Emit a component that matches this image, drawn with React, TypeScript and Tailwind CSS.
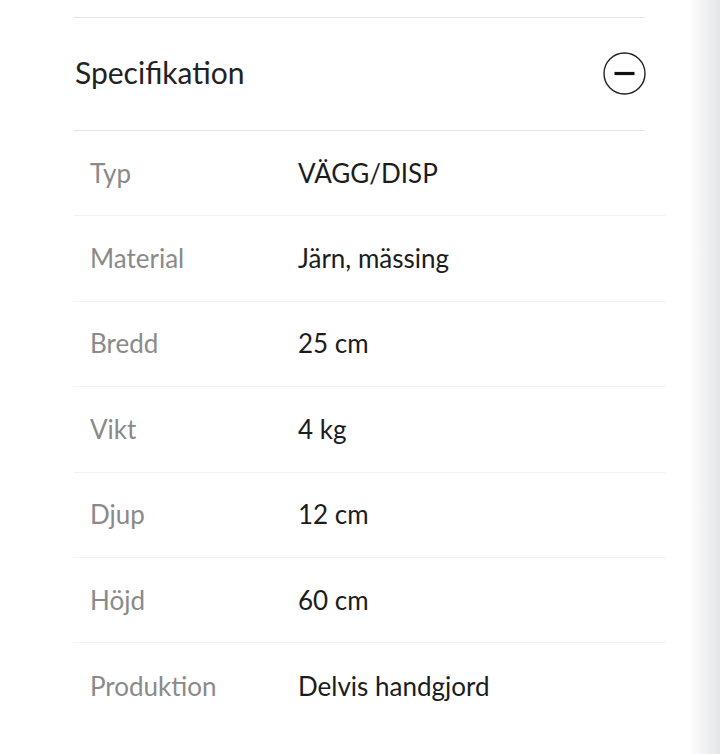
import React from "react";

const rows: [string, string][] = [
  ["Typ", "VÄGG/DISP"],
  ["Material", "Järn, mässing"],
  ["Bredd", "25 cm"],
  ["Vikt", "4 kg"],
  ["Djup", "12 cm"],
  ["Höjd", "60 cm"],
  ["Produktion", "Delvis handgjord"],
];

export default function App() {
  return (
    <div className="flex h-[754px] w-[720px] overflow-hidden bg-white" style={{ fontFamily: "Lato, 'Noto Sans', sans-serif" }}>
      <div className="flex-1 pl-[74px] pt-[17px]">
        <div className="w-[571px] border-y border-[#e4e4e4]">
          <div className="flex h-[112px] items-center justify-between">
            <span className="-mt-1 pl-px text-[30px] text-[#222]">Specifikation</span>
            <svg width="43" height="43" viewBox="0 0 43 43" className="-mr-px -mt-0.5">
              <circle cx="21.5" cy="21.5" r="20.5" fill="none" stroke="#222" strokeWidth="1.4" />
              <line x1="11.5" y1="21.5" x2="31.5" y2="21.5" stroke="#111" strokeWidth="3.2" />
            </svg>
          </div>
        </div>
        <div className="w-[592px]">
          {rows.map(([k, v], i) => (
            <div
              key={k}
              className={
                "flex h-[85.4px] items-center text-[26px] " +
                (i < rows.length - 1 ? "border-b border-[#f2f2f2]" : "")
              }
            >
              <span className="w-[224px] pl-4 text-[#8a8a8a]">{k}</span>
              <span className="text-[#1c1c1c]">{v}</span>
            </div>
          ))}
        </div>
      </div>
      <div className="w-[32px] bg-linear-to-r from-white to-[#e4e5e8]" />
    </div>
  );
}
